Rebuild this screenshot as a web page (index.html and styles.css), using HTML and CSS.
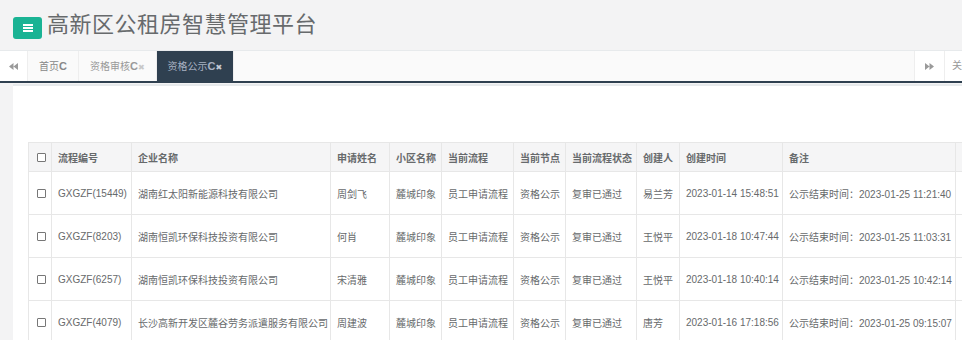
FILE: index.html
```html
<!DOCTYPE html>
<html lang="zh-CN">
<head>
<meta charset="utf-8">
<title>高新区公租房智慧管理平台</title>
<link rel="stylesheet" href="styles.css">
</head>
<body>
<header class="topbar">
  <span class="menu-btn"><svg width="10" height="8" viewBox="0 0 10 8"><rect x="0" y="0" width="10" height="2" fill="#fff"/><rect x="0" y="3" width="10" height="2" fill="#fff"/><rect x="0" y="6" width="10" height="2" fill="#fff"/></svg></span>
  <h1 class="title">高新区公租房智慧管理平台</h1>
</header>
<nav class="tabs">
  <span class="roll roll-left"><svg width="9" height="7" viewBox="0 0 9 7"><path d="M4.5 0 L0 3.5 L4.5 7 Z M9 0 L4.5 3.5 L9 7 Z" fill="#9a9a9a"/></svg></span>
  <div class="page-tabs">
    <a class="tab tab-home">首页<b class="ic">C</b></a>
    <a class="tab">资格审核<b class="ic">C</b><i class="x">✖</i></a>
    <a class="tab active">资格公示<b class="ic">C</b><i class="x">✖</i></a>
  </div>
  <span class="roll roll-right"><svg width="9" height="7" viewBox="0 0 9 7"><path d="M0 0 L4.5 3.5 L0 7 Z M4.5 0 L9 3.5 L4.5 7 Z" fill="#9a9a9a"/></svg></span>
  <span class="close-ops">关闭操作</span>
</nav>
<main class="wrap">
  <section class="panel">
    <table class="grid">
      <colgroup>
        <col class="c1"><col class="c2"><col class="c3"><col class="c4"><col class="c5"><col class="c6"><col class="c7"><col class="c8"><col class="c9"><col class="c10"><col class="c11"><col class="c12">
      </colgroup>
      <thead>
        <tr>
          <th><input type="checkbox" class="cb"></th>
          <th>流程编号</th><th>企业名称</th><th>申请姓名</th><th>小区名称</th><th>当前流程</th><th>当前节点</th><th>当前流程状态</th><th>创建人</th><th>创建时间</th><th>备注</th><th>操作</th>
        </tr>
      </thead>
      <tbody>
        <tr>
          <td><input type="checkbox" class="cb"></td>
          <td>GXGZF(15449)</td><td>湖南红太阳新能源科技有限公司</td><td>周剑飞</td><td>麓城印象</td><td>员工申请流程</td><td>资格公示</td><td>复审已通过</td><td>易兰芳</td><td>2023-01-14 15:48:51</td><td>公示结束时间：2023-01-25 11:21:40</td><td><span class="btn">查看</span></td>
        </tr>
        <tr>
          <td><input type="checkbox" class="cb"></td>
          <td>GXGZF(8203)</td><td>湖南恒凯环保科技投资有限公司</td><td>何肖</td><td>麓城印象</td><td>员工申请流程</td><td>资格公示</td><td>复审已通过</td><td>王悦平</td><td>2023-01-18 10:47:44</td><td>公示结束时间：2023-01-25 11:03:31</td><td><span class="btn">查看</span></td>
        </tr>
        <tr>
          <td><input type="checkbox" class="cb"></td>
          <td>GXGZF(6257)</td><td>湖南恒凯环保科技投资有限公司</td><td>宋清雅</td><td>麓城印象</td><td>员工申请流程</td><td>资格公示</td><td>复审已通过</td><td>王悦平</td><td>2023-01-18 10:40:14</td><td>公示结束时间：2023-01-25 10:42:14</td><td><span class="btn">查看</span></td>
        </tr>
        <tr>
          <td><input type="checkbox" class="cb"></td>
          <td>GXGZF(4079)</td><td>长沙高新开发区麓谷劳务派遣服务有限公司</td><td>周建波</td><td>麓城印象</td><td>员工申请流程</td><td>资格公示</td><td>复审已通过</td><td>唐芳</td><td>2023-01-16 17:18:56</td><td>公示结束时间：2023-01-25 09:15:07</td><td><span class="btn">查看</span></td>
        </tr>
      </tbody>
    </table>
  </section>
</main>
</body>
</html>
```
FILE: styles.css
```css
html, body {
  margin: 0;
  padding: 0;
}
body {
  width: 962px;
  height: 340px;
  overflow: hidden;
  background: #f3f3f4;
  font-family: "Liberation Sans", "Noto Sans CJK SC", sans-serif;
  color: #676a6c;
}

/* top header */
.topbar {
  height: 50px;
  display: flex;
  align-items: flex-start;
  padding-left: 13px;
  box-sizing: border-box;
}
.menu-btn {
  margin-top: 17px;
  width: 29px;
  height: 22px;
  background: #1ab394;
  border-radius: 3px;
  display: flex;
  align-items: center;
  justify-content: center;
}
.title {
  margin: 12px 0 0 5px;
  font-size: 22px;
  line-height: 26px;
  font-weight: normal;
  color: #676a6c;
  letter-spacing: 0.5px;
}

/* tab bar */
.tabs {
  display: flex;
  width: 1010px;
  height: 30px;
  background: #fafafa;
  border-top: 1px solid #e7eaec;
  border-bottom: 2px solid #2f4050;
  font-size: 10px;
  line-height: 30px;
}
.roll {
  display: flex;
  align-items: center;
  justify-content: center;
  background: #fff;
  flex: none;
}
.roll-left {
  width: 27px;
  border-right: 1px solid #eee;
}
.roll-right {
  width: 29px;
  border-left: 1px solid #eee;
  border-right: 1px solid #eee;
}
.page-tabs {
  flex: 1;
  display: flex;
}
.tab {
  padding: 0 11px;
  border-right: 1px solid #eee;
  color: #999;
  white-space: nowrap;
}
.tab-home {
  color: #888;
}
.tab .ic {
  font-weight: bold;
  font-size: 11px;
}
.tab .x {
  font-style: normal;
  font-size: 8px;
  color: #c8c8c8;
  font-family: "DejaVu Sans", sans-serif;
}
.tab.active {
  background: #2f4050;
  color: #a7b1c2;
}
.tab.active .x {
  color: #c5cbd6;
}
.close-ops {
  flex: none;
  width: 58px;
  padding-left: 7px;
  background: #fff;
  color: #999;
  white-space: nowrap;
}

/* content */
.wrap {
  padding: 1px 0 0 13px;
}
.panel {
  background: #fff;
  border-top: 2px solid #e7eaec;
  padding: 56px 0 0 15px;
  height: 260px;
}
.grid {
  border-collapse: collapse;
  table-layout: fixed;
  width: 1007px;
  font-size: 10px;
  border: 1px solid #e7e7e7;
}
.c1 { width: 23px; }
.c2 { width: 80px; }
.c3 { width: 199px; }
.c4 { width: 59px; }
.c5 { width: 52px; }
.c6 { width: 72px; }
.c7 { width: 52px; }
.c8 { width: 71px; }
.c9 { width: 43px; }
.c10 { width: 103px; }
.c11 { width: 173px; }
.c12 { width: 80px; }

.grid th,
.grid td {
  border: 1px solid #e7e7e7;
  padding: 0 6px;
  text-align: left;
  vertical-align: middle;
  white-space: nowrap;
  overflow: hidden;
}
.grid th {
  height: 28px;
  background: #f5f5f6;
  font-weight: bold;
  color: #676a6c;
}
.grid td {
  height: 42px;
  color: #676a6c;
}
.grid th:first-child,
.grid td:first-child {
  padding: 0 0 0 8px;
}
.cb {
  appearance: none;
  -webkit-appearance: none;
  display: block;
  margin: 0;
  width: 9px;
  height: 9px;
  border: 1px solid #777;
  border-radius: 1px;
  background: #fff;
  box-sizing: border-box;
}
.btn {
  display: inline-block;
  height: 24px;
  line-height: 24px;
  padding: 0 8px;
  background: #1ab394;
  color: #fff;
  border-radius: 2px;
}
```
